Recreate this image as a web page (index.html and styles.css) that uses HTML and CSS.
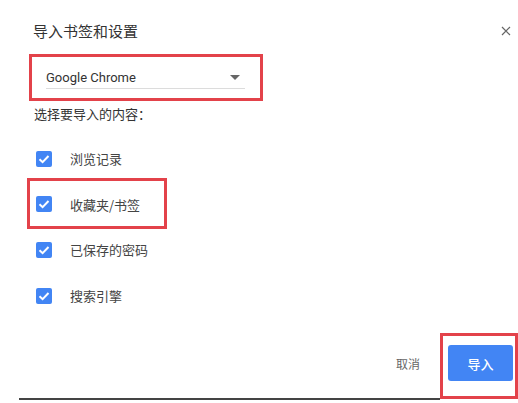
FILE: index.html
```html
<!DOCTYPE html>
<html lang="zh-CN">
<head>
<meta charset="utf-8">
<title>导入书签和设置</title>
<link rel="stylesheet" href="styles.css">
</head>
<body>
<div class="dialog">
  <div class="header">
    <div class="title">导入书签和设置</div>
    <svg class="close" width="10" height="10" viewBox="0 0 10 10"><path d="M1 1L9 9M9 1L1 9" stroke="#666" stroke-width="1.2" fill="none"/></svg>
  </div>
  <div class="select">
    <span class="select-text">Google Chrome</span>
    <span class="arrow"></span>
  </div>
  <div class="subtitle">选择要导入的内容：</div>
  <div class="options">
    <div class="row"><span class="check"><svg width="16" height="16" viewBox="0 0 16 16"><path d="M3.5 8.2L6.6 11.2L12.5 5" stroke="#fff" stroke-width="2" fill="none"/></svg></span><span class="label">浏览记录</span></div>
    <div class="row"><span class="check"><svg width="16" height="16" viewBox="0 0 16 16"><path d="M3.5 8.2L6.6 11.2L12.5 5" stroke="#fff" stroke-width="2" fill="none"/></svg></span><span class="label">收藏夹/书签</span></div>
    <div class="row"><span class="check"><svg width="16" height="16" viewBox="0 0 16 16"><path d="M3.5 8.2L6.6 11.2L12.5 5" stroke="#fff" stroke-width="2" fill="none"/></svg></span><span class="label">已保存的密码</span></div>
    <div class="row"><span class="check"><svg width="16" height="16" viewBox="0 0 16 16"><path d="M3.5 8.2L6.6 11.2L12.5 5" stroke="#fff" stroke-width="2" fill="none"/></svg></span><span class="label">搜索引擎</span></div>
  </div>
  <div class="footer">
    <span class="cancel">取消</span>
    <span class="import">导入</span>
  </div>
  <div class="bottom-line"></div>
  <div class="mark mark-select"></div>
  <div class="mark mark-row"></div>
  <div class="mark mark-button"></div>
</div>
</body>
</html>
```
FILE: styles.css
```css
html, body {
  margin: 0;
  padding: 0;
  background: #fff;
}
body {
  width: 518px;
  height: 403px;
  overflow: hidden;
  font-family: "Noto Sans CJK SC", "Noto Sans", sans-serif;
  color: #333;
}
.dialog {
  position: relative;
  width: 518px;
  height: 403px;
  display: flex;
  flex-direction: column;
}
.header {
  display: flex;
  justify-content: space-between;
  align-items: center;
  height: 20px;
  margin-top: 21px;
  padding: 0 7px 0 33px;
}
.title {
  font-size: 15px;
  line-height: 20px;
  color: #333;
}
.select {
  margin: 25px 0 0 46px;
  width: 194px;
  padding-right: 5px;
  height: 22px;
  border-bottom: 1px solid #dcdcdc;
  display: flex;
  align-items: center;
  justify-content: space-between;
}
.select-text {
  font-family: Roboto, "Liberation Sans", sans-serif;
  font-size: 13px;
  color: #333;
}
.arrow {
  width: 0;
  height: 0;
  border-left: 5px solid transparent;
  border-right: 5px solid transparent;
  border-top: 5px solid #666;
}
.subtitle {
  margin: 16px 0 0 34px;
  font-size: 13px;
  line-height: 18px;
  color: #333;
}
.options {
  margin-top: 13px;
  display: flex;
  flex-direction: column;
}
.row {
  height: 45.6px;
  display: flex;
  align-items: center;
  padding-left: 36px;
  gap: 18px;
}
.check {
  width: 16px;
  height: 16px;
  border-radius: 2px;
  background: #4285f4;
  display: flex;
}
.label {
  font-size: 13px;
  color: #444;
}
.footer {
  margin-top: auto;
  display: flex;
  justify-content: flex-end;
  align-items: center;
  padding-right: 5px;
  gap: 28px;
}
.cancel {
  font-size: 12px;
  color: #666;
}
.import {
  width: 65px;
  height: 36px;
  border-radius: 3px;
  background: #4285f4;
  color: #fff;
  font-size: 13px;
  font-weight: 500;
  display: flex;
  align-items: center;
  justify-content: center;
}
.bottom-line {
  margin: 17px 0 3px 19px;
  width: 421px;
  height: 2px;
  background: #444;
}
.mark {
  position: absolute;
  box-sizing: border-box;
  border: 3px solid #e3424a;
}
.mark-select {
  left: 29px;
  top: 54px;
  width: 234px;
  height: 47px;
}
.mark-row {
  left: 27px;
  top: 178px;
  width: 140px;
  height: 51px;
}
.mark-button {
  left: 440px;
  top: 333px;
  width: 78px;
  height: 66px;
}
```
